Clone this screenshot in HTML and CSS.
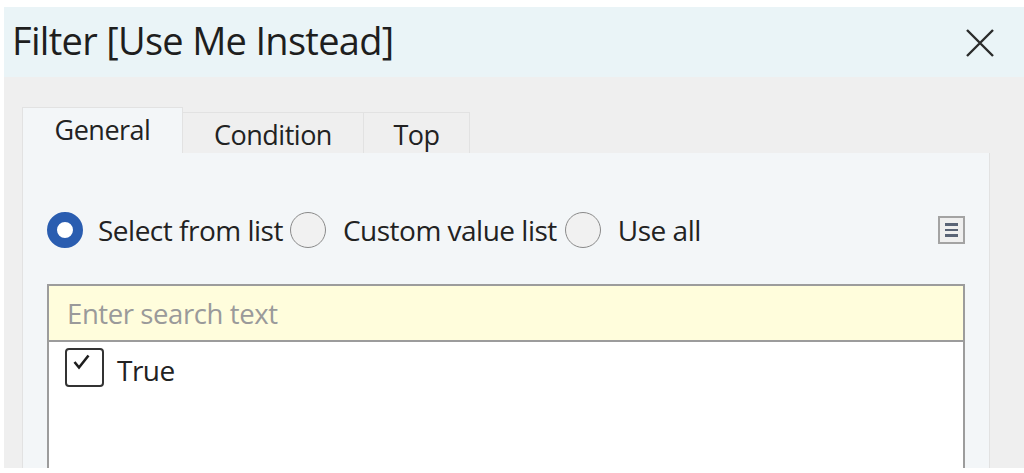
FILE: index.html
```html
<!DOCTYPE html>
<html>
<head>
<meta charset="utf-8">
<link rel="stylesheet" href="styles.css">
</head>
<body>
<div class="window">
  <div class="titlebar">
    <div class="title">Filter [Use Me Instead]</div>
    <svg class="close" width="30" height="28" viewBox="0 0 30 28"><path d="M2 1 L28 27 M28 1 L2 27" stroke="#2b2b2b" stroke-width="2.4" fill="none"/></svg>
  </div>
  <div class="body">
    <div class="tabs">
      <div class="tab active">General</div>
      <div class="tab cond">Condition</div>
      <div class="tab top">Top</div>
    </div>
    <div class="panel">
      <div class="radios">
        <div class="opt"><span class="radio on"></span><span class="lbl">Select from list</span></div>
        <div class="opt"><span class="radio"></span><span class="lbl">Custom value list</span></div>
        <div class="opt"><span class="radio"></span><span class="lbl">Use all</span></div>
        <div class="menu"><span></span><span></span><span></span></div>
      </div>
      <div class="listbox">
        <div class="search">Enter search text</div>
        <div class="items">
          <div class="item">
            <span class="check"><svg width="18" height="16" viewBox="0 0 18 16"><path d="M1.5 8 L6 13.5 L15.5 1.5" stroke="#1e1e1e" stroke-width="2.6" fill="none"/></svg></span>
            <span class="lbl">True</span>
          </div>
        </div>
      </div>
    </div>
  </div>
</div>
</body>
</html>
```
FILE: styles.css
```css
html, body {
  margin: 0;
  padding: 0;
  background: #ffffff;
  height: 473px;
  overflow: hidden;
}
body {
  font-family: "Open Sans", "Noto Sans", sans-serif;
  color: #222;
}
.window {
  margin: 7px 0 0 4px;
  height: 461px;
  display: flex;
  flex-direction: column;
}
.titlebar {
  height: 70px;
  background: #eaf4f7;
  display: flex;
  align-items: center;
  justify-content: space-between;
  padding: 0 29px 0 8px;
  flex: none;
}
.title {
  font-size: 38px;
  letter-spacing: -0.7px;
  color: #1e1e1e;
  margin-top: -4px;
}
.close {
  display: block;
  margin-top: 1px;
}
.body {
  flex: 1;
  background: #efefef;
  padding: 30px 34px 0 18px;
  display: flex;
  flex-direction: column;
}
.tabs {
  display: flex;
  align-items: flex-end;
  height: 46px;
  flex: none;
}
.tab {
  height: 41px;
  box-sizing: border-box;
  font-size: 27px;
  display: flex;
  justify-content: center;
  align-items: center;
  border: 1px solid #e2e2e2;
  border-bottom: none;
  background: #efefef;
  color: #222;
  letter-spacing: -0.5px;
}
.tab.active {
  width: 161px;
  height: 46px;
  background: #f3f6f8;
  padding-bottom: 2px;
}
.tab.cond {
  width: 181px;
  border-left: none;
  padding-top: 2px;
}
.tab.top {
  width: 106px;
  border-left: none;
  padding-top: 2px;
}
.panel {
  flex: 1;
  background: #f3f6f8;
  border: 1px solid #e2e2e2;
  border-top: none;
  border-bottom: none;
  padding: 59px 24px 0 24px;
  display: flex;
  flex-direction: column;
}
.radios {
  display: flex;
  align-items: center;
  height: 36px;
}
.opt {
  display: flex;
  align-items: center;
}
.radio {
  width: 36px;
  height: 36px;
  box-sizing: border-box;
  border-radius: 50%;
  border: 1.5px solid #8a8a8a;
  background: #f1f1f1;
  flex: none;
}
.radio.on {
  border: 10.5px solid #2a5db0;
  background: #ffffff;
}
.lbl {
  font-size: 28px;
  letter-spacing: -0.5px;
  color: #222;
  margin-left: 15px;
  margin-right: 7px;
  margin-top: 0px;
}
.opt:nth-child(2) .lbl { margin-left: 17px; margin-right: 8px; }
.opt:nth-child(3) .lbl { margin-left: 17px; }
.menu {
  margin-left: auto;
  margin-right: 0;
  width: 27px;
  height: 28px;
  box-sizing: border-box;
  border: 2px solid #a3a3a3;
  background: #efefef;
  display: flex;
  flex-direction: column;
  align-items: center;
  justify-content: center;
  gap: 3px;
}
.menu span {
  display: block;
  width: 13px;
  height: 2.5px;
  background: #5a6476;
}
.listbox {
  margin-top: 36px;
  flex: 1;
  display: flex;
  flex-direction: column;
  border: 2px solid #9c9c9c;
  border-bottom: none;
  background: #ffffff;
}
.search {
  height: 56px;
  box-sizing: border-box;
  background: #fffddc;
  border-bottom: 2px solid #9c9c9c;
  font-size: 27.5px;
  color: #9a9a9a;
  padding-left: 18px;
  display: flex;
  align-items: center;
  letter-spacing: -0.4px;
}
.items {
  flex: 1;
  background: #ffffff;
  padding: 4px 0 0 16px;
}
.item {
  display: flex;
  align-items: center;
}
.check {
  width: 39px;
  height: 39px;
  box-sizing: border-box;
  border: 2px solid #333;
  border-radius: 4px;
  background: #fff;
  position: relative;
  flex: none;
}
.check svg {
  position: absolute;
  left: 6px;
  top: 4px;
}
.item .lbl {
  margin-left: 13px;
  margin-top: 5px;
}
```
